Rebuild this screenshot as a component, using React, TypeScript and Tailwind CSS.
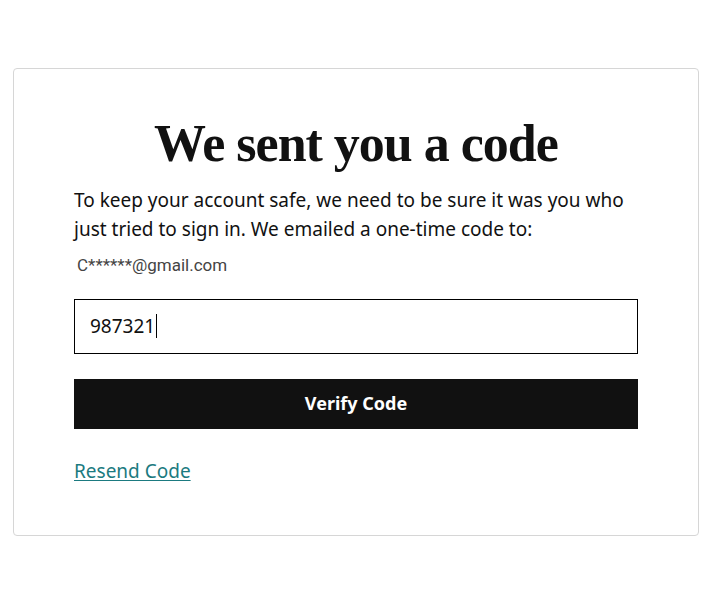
export default function App() {
  return (
    <div className="min-h-[599px] bg-white pt-[68px] px-[13px]" style={{ fontFamily: '"Noto Sans", Arial, sans-serif' }}>
      <div className="w-[686px] h-[468px] rounded border border-[#d6d6d6] bg-white px-[60px] pt-[46px]">
        <h1
          className="text-center text-[52px] font-bold leading-[58px] tracking-[-1px] text-[#111]"
          style={{ fontFamily: '"Liberation Serif", "Times New Roman", serif' }}
        >
          We sent you a code
        </h1>
        <p className="mt-[13px] text-[19px] leading-[29px] text-[#111]">
          To keep your account safe, we need to be sure it was you who just tried to sign in. We emailed a one-time code to:
        </p>
        <div
          className="mt-[9px] pl-[3px] text-[17px] text-[#444]"
          style={{ fontFamily: 'Roboto, Arial, sans-serif' }}
        >
          C******@gmail.com
        </div>
        <div className="mt-[20px] flex h-[55px] w-[564px] items-center border border-black px-[15px]">
          <span className="text-[19px] text-[#111]">987321</span>
          <span className="ml-[1px] h-[24px] w-px bg-black" />
        </div>
        <button className="mt-[25px] h-[50px] w-[564px] bg-[#111] text-[18px] font-bold text-white">
          Verify Code
        </button>
        <div className="mt-[28px]">
          <a href="#" className="text-[19px] text-[#1b7a80] underline underline-offset-2">
            Resend Code
          </a>
        </div>
      </div>
    </div>
  );
}
